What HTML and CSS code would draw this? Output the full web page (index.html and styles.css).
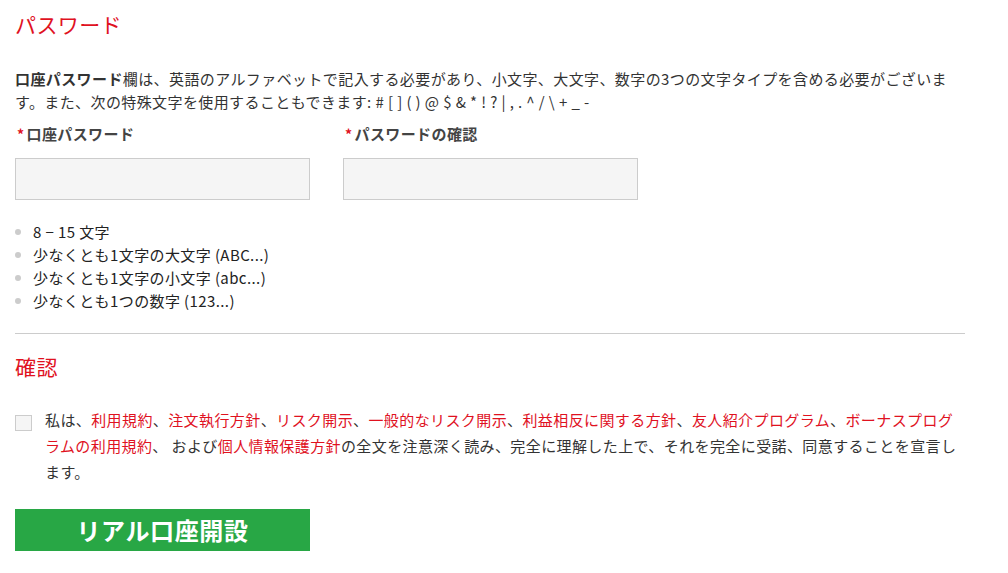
FILE: index.html
```html
<!DOCTYPE html>
<html lang="ja">
<head>
<meta charset="utf-8">
<link rel="stylesheet" href="styles.css">
</head>
<body>
<div class="page">
  <h2 class="section-title title-password">パスワード</h2>
  <p class="intro"><strong>口座パスワード</strong>欄は、英語のアルファベットで記入する必要があり、小文字、大文字、数字の3つの文字タイプを含める必要がございます。また、次の特殊文字を使用することもできます: # [ ] ( ) @ $ &amp; * ! ? | , . ^ / \ + _ -</p>
  <div class="fields">
    <div class="field">
      <label class="field-label"><span class="req">*</span>口座パスワード</label>
      <input class="field-input" type="password">
    </div>
    <div class="field">
      <label class="field-label"><span class="req">*</span>パスワードの確認</label>
      <input class="field-input" type="password">
    </div>
  </div>
  <ul class="rules">
    <li>8 − 15 文字</li>
    <li>少なくとも1文字の大文字 (ABC...)</li>
    <li>少なくとも1文字の小文字 (abc...)</li>
    <li>少なくとも1つの数字 (123...)</li>
  </ul>
  <hr class="divider">
  <h2 class="section-title title-confirm">確認</h2>
  <div class="agree">
    <input class="agree-box" type="checkbox">
    <p class="agree-text">私は、<a>利用規約</a>、<a>注文執行方針</a>、<a>リスク開示</a>、<a>一般的なリスク開示</a>、<a>利益相反に関する方針</a>、<a>友人紹介プログラム</a>、<a>ボーナスプログラムの利用規約</a>、 および<a>個人情報保護方針</a>の全文を注意深く読み、完全に理解した上で、それを完全に受諾、同意することを宣言します。</p>
  </div>
  <button class="submit" type="button">リアル口座開設</button>
</div>
</body>
</html>
```

FILE: styles.css
```css
html, body {
  margin: 0;
  padding: 0;
  background: #fff;
}

body {
  font-family: "Noto Sans CJK JP", "Noto Sans", sans-serif;
  font-size: 15px;
  color: #333;
  letter-spacing: 0.4px;
}

.page {
  width: 950px;
  margin-left: 15px;
  padding-top: 11px;
}

.section-title {
  margin: 0;
  font-size: 21px;
  line-height: 26px;
  font-weight: 400;
  color: #e0121f;
}

.intro {
  margin: 30px 0 0;
  line-height: 23px;
}

.intro strong {
  font-weight: 700;
  color: #333;
}

.fields {
  display: flex;
  gap: 33px;
  margin-top: 10px;
}

.field {
  display: flex;
  flex-direction: column;
  width: 295px;
}

.field-label {
  font-weight: 700;
  color: #444;
  line-height: 22px;
  padding-left: 2px;
}

.req {
  color: #e0121f;
  margin-right: 2px;
  font-size: 14px;
}

.field-input {
  margin: 13px 0 0;
  box-sizing: border-box;
  width: 295px;
  height: 42px;
  border: 1px solid #ccc;
  background: #f5f5f5;
  padding: 0 10px;
  outline: none;
}

.rules {
  list-style: none;
  margin: 20px 0 0;
  padding: 0;
}

.rules li {
  position: relative;
  line-height: 23px;
  padding-left: 18px;
  color: #222;
}

.rules li::before {
  content: "";
  position: absolute;
  left: 0;
  top: 9px;
  width: 6px;
  height: 6px;
  border-radius: 50%;
  background: #ccc;
}

.divider {
  margin: 21px 0 0;
  border: 0;
  border-top: 1px solid #ccc;
  height: 0;
}

.title-confirm {
  margin-top: 19px;
}

.agree {
  display: flex;
  align-items: flex-start;
  gap: 13px;
  margin-top: 28px;
}

.agree-box {
  appearance: none;
  -webkit-appearance: none;
  flex: none;
  margin: 8px 0 0;
  width: 17px;
  height: 16px;
  box-sizing: border-box;
  border: 1px solid #ccc;
  background: #f5f5f5;
}

.agree-text {
  margin: 0;
  line-height: 26px;
  color: #333;
}

.agree-text a {
  color: #e0121f;
  text-decoration: none;
}

.submit {
  display: block;
  margin-top: 24px;
  width: 295px;
  height: 42px;
  border: 0;
  background: #28a745;
  color: #fff;
  font-family: "Noto Sans CJK JP", sans-serif;
  font-size: 24px;
  font-weight: 700;
  letter-spacing: 0.6px;
  line-height: 42px;
  padding: 0;
}
```
